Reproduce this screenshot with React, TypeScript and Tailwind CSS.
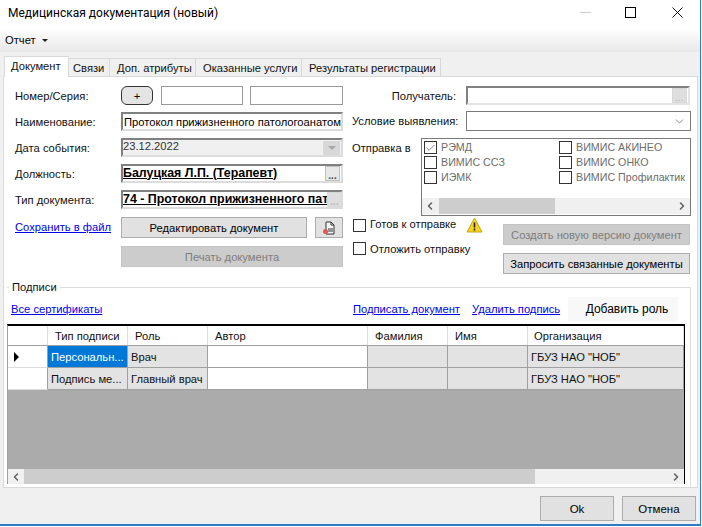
import { ChevronDown, ChevronLeft, ChevronRight, Check } from "lucide-react";
import type { ReactNode } from "react";

const inputClass =
  "h-[19px] border-2 border-t-[#808080] border-l-[#808080] border-r-[#dcdcdc] border-b-[#dcdcdc] flex items-center overflow-hidden whitespace-nowrap";

const DotsButton = ({ faded }: { faded?: boolean }) => (
  <div
    className={`w-[15px] h-[15px] shrink-0 border flex items-end justify-center leading-[9px] text-[10px] ml-auto mr-px ${
      faded ? "border-[#d8d8d8] bg-[#dedede] text-[#bbbbbb]" : "border-[#c0c0c0] bg-[#e8e8e8] text-[#444444]"
    }`}
  >
    ...
  </div>
);

const FormRow = ({ label, top, children }: { label: string; top: number; children: ReactNode }) => (
  <div className="flex items-center" style={{ marginTop: top }}>
    <div className="w-[106px] shrink-0 text-[#111111]">{label}</div>
    <div className="w-[222px]">{children}</div>
  </div>
);

const Box = ({ checked }: { checked?: boolean }) => (
  <div className="w-[13px] h-[13px] shrink-0 border border-[#333333] bg-white flex items-center justify-center">
    {checked && <Check size={12} strokeWidth={1.5} className="text-[#555555]" />}
  </div>
);

const ListItem = ({ label, checked }: { label: string; checked?: boolean }) => (
  <div className="h-[15px] flex items-center gap-[4px] text-[#6d6d6d] text-[10.7px] whitespace-nowrap">
    <Box checked={checked} />
    <span className="-mt-[2px]">{label}</span>
  </div>
);

const columns = [
  { title: "Тип подписи", width: "w-[80px]", pad: "pl-[7px]" },
  { title: "Роль", width: "w-[80px]", pad: "pl-[7px]" },
  { title: "Автор", width: "w-[160px]", pad: "pl-[7px]" },
  { title: "Фамилия", width: "w-[80px]", pad: "pl-[7px]" },
  { title: "Имя", width: "w-[80px]", pad: "pl-[7px]" },
  { title: "Организация", width: "w-[156px]", pad: "pl-[6px]" },
];

const rows = [
  { type: "Персональн...", role: "Врач", selected: true },
  { type: "Подпись ме...", role: "Главный врач", selected: false },
];

const cell = "h-[22px] flex items-center pl-[3px] border-r border-b border-[#a0a0a0] whitespace-nowrap overflow-hidden";

const App = () => {
  return (
    <div
      className="w-[702px] h-[527px] overflow-hidden bg-white text-[11.2px] leading-[14px] text-black"
      style={{ fontFamily: '"Liberation Sans", Arial, sans-serif' }}
    >
      <div className="w-[701px] h-[526px] flex flex-col bg-[#f0f0f0] border-r border-b-2 border-[#2b7cc4]">
        {/* title bar */}
        <div className="h-[28px] shrink-0 bg-white flex items-center pl-[8px] text-[12px]" style={{ fontFamily: 'Roboto, sans-serif' }}>
          <span className="flex-1 -mt-[3px]">Медицинская документация (новый)</span>
          <div className="w-[11px] h-px bg-[#cccccc] mr-[34px] -mt-[4px]" />
          <div className="w-[11px] h-[11px] border border-black mr-[36px] -mt-[4px]" />
          <svg width="11" height="11" viewBox="0 0 11 11" className="mr-[17px] -mt-[4px]">
            <path d="M0.5 0.5l10 10M10.5 0.5l-10 10" stroke="#111111" strokeWidth="1" />
          </svg>
        </div>

        {/* menu */}
        <div className="h-[24px] shrink-0 bg-gradient-to-b from-white to-[#e8e8e8] flex items-center pl-[5px] gap-[6px]">
          <span>Отчет</span>
          <span className="border-x-[3px] border-x-transparent border-t-[3px] border-t-[#222222]" />
        </div>

        {/* tabs */}
        <div className="h-[24px] shrink-0 flex items-end pl-[4px] text-[#111111]">
          <div className="w-[65px] h-[21px] -mb-px z-10 bg-white border border-b-0 border-[#d9d9d9] pl-[6px] pt-[2px]">Документ</div>
          <div className="w-[41px] h-[18px] bg-[#f0f0f0] border-t border-r border-[#d9d9d9] pl-[4px] pt-[2px]">Связи</div>
          <div className="w-[86px] h-[18px] bg-[#f0f0f0] border-t border-r border-[#d9d9d9] pl-[7px] pt-[2px]">Доп. атрибуты</div>
          <div className="w-[106px] h-[18px] bg-[#f0f0f0] border-t border-r border-[#d9d9d9] pl-[7px] pt-[2px]">Оказанные услуги</div>
          <div className="w-[139px] h-[18px] bg-[#f0f0f0] border-t border-r border-[#d9d9d9] pl-[7px] pt-[2px] whitespace-nowrap">Результаты регистрации</div>
        </div>

        {/* tab page */}
        <div className="ml-[3px] w-[695px] h-[412px] shrink-0 bg-white border border-[#d9d9d9] flex flex-col">
          <div className="h-[210px] shrink-0 flex">
            {/* left column */}
            <div className="w-[348px] shrink-0 pl-[11px] pt-[9px]">
              <FormRow label="Номер/Серия:" top={0}>
                <div className="flex items-center h-[19px]">
                  <div className="w-[32px] h-[19px] rounded-[6px] border border-[#333333] bg-[#e4e4e4] flex items-center justify-center">+</div>
                  <div className="w-[82px] h-[19px] ml-[8px] border border-[#999999]" />
                  <div className="w-[93px] h-[19px] ml-[7px] border border-[#999999]" />
                </div>
              </FormRow>
              <FormRow label="Наименование:" top={7}>
                <div className={`${inputClass} pl-px`}>Протокол прижизненного патологоанатоми</div>
              </FormRow>
              <FormRow label="Дата события:" top={7}>
                <div className={`${inputClass} bg-[#f0f0f0] text-[#333333]`}>
                  <span className="-mt-[3px]">23.12.2022</span>
                  <div className="ml-auto mr-px w-[17px] h-[14px] bg-[#d8d8d8] flex items-center justify-center">
                    <span className="border-x-[4px] border-x-transparent border-t-[4px] border-t-[#a8a8a8]" />
                  </div>
                </div>
              </FormRow>
              <FormRow label="Должность:" top={7}>
                <div className={`${inputClass} font-bold text-[12.4px]`}>
                  <span className="underline underline-offset-1 -mt-[2px]">Балуцкая Л.П. (Терапевт)</span>
                  <DotsButton />
                </div>
              </FormRow>
              <FormRow label="Тип документа:" top={7}>
                <div className={`${inputClass} font-bold text-[12.4px]`}>
                  <span className="underline underline-offset-1 w-[204px] shrink-0 overflow-hidden -mt-[2px]">74 - Протокол прижизненного пат</span>
                  <DotsButton faded />
                </div>
              </FormRow>
              <div className="flex items-start mt-[8px]">
                <a className="w-[106px] shrink-0 text-[#0000ee] underline mt-[3px]">Сохранить в файл</a>
                <div className="w-[186px] h-[21px] bg-[#e1e1e1] border border-[#adadad] flex items-center justify-center">Редактировать документ</div>
                <div className="w-[28px] h-[21px] ml-[8px] bg-[#e1e1e1] border border-[#adadad] flex items-center justify-center">
                  <svg width="16" height="16" viewBox="0 0 16 16" fill="none">
                    <path d="M5 2h5l3 3v9H5z" fill="#f4f4f4" stroke="#333333" />
                    <path d="M10 2v3h3M7 9h5M7 11h5" stroke="#333333" />
                    <circle cx="4.5" cy="11.5" r="2.5" fill="#e45454" />
                  </svg>
                </div>
              </div>
              <div className="ml-[106px] mt-[8px] w-[222px] h-[21px] bg-[#cccccc] border border-[#c4c4c4] text-[#7d7d7d] flex items-center justify-center">Печать документа</div>
            </div>

            {/* right column */}
            <div className="flex-1 pt-[9px]">
              <div className="flex items-center h-[19px]">
                <div className="w-[104px] text-right text-[#111111]">Получатель:</div>
                <div className="ml-[10px] w-[224px] h-[19px] border-2 border-t-[#808080] border-l-[#808080] border-r-[#e4e4e4] border-b-[#e4e4e4] flex items-center">
                  <DotsButton faded />
                </div>
              </div>
              <div className="flex items-center mt-[6px]">
                <div className="w-[102px] text-[#111111] whitespace-nowrap">Условие выявления:</div>
                <div className="ml-[12px] w-[225px] h-[20px] border border-[#7a7a7a] flex items-center justify-end pr-[4px]">
                  <ChevronDown size={13} strokeWidth={1.2} className="text-[#555555]" />
                </div>
              </div>
              <div className="flex mt-[7px]">
                <div className="w-[69px] pt-[3px] text-[#111111]">Отправка в</div>
                <div className="w-[270px] h-[78px] border border-[#7a7a7a] flex flex-col">
                  <div className="flex-1 grid grid-cols-[135px_1fr] pl-[2px] pt-px overflow-hidden">
                    <div>
                      <ListItem label="РЭМД" checked />
                      <ListItem label="ВИМИС ССЗ" />
                      <ListItem label="ИЭМК" />
                    </div>
                    <div className="overflow-hidden">
                      <ListItem label="ВИМИС АКИНЕО" />
                      <ListItem label="ВИМИС ОНКО" />
                      <ListItem label="ВИМИС Профилактик" />
                    </div>
                  </div>
                  <div className="h-[16px] mb-px bg-[#f0f0f0] flex items-center justify-between">
                    <ChevronLeft size={12} strokeWidth={3} className="text-[#606060] ml-[2px]" />
                    <div className="h-[16px] w-[116px] bg-[#cdcdcd] ml-[3px] mr-auto" />
                    <ChevronRight size={12} strokeWidth={3} className="text-[#606060] mr-[2px]" />
                  </div>
                </div>
              </div>
              <div className="flex mt-[2px] pl-[1px]">
                <div className="w-[150px] shrink-0">
                  <div className="flex items-center h-[15px] gap-[4px] text-[#111111]">
                    <Box />
                    <span className="whitespace-nowrap -mt-[3px]">Готов к отправке</span>
                    <svg width="17" height="16" viewBox="0 0 17 16" className="ml-[6px] -mt-[2px] shrink-0">
                      <path d="M8.5 1L16 15H1z" fill="#f5d327" stroke="#c9a30f" />
                      <path d="M8.5 5.5v5M8.5 11.5v2" stroke="#222222" strokeWidth="1.6" />
                    </svg>
                  </div>
                  <div className="flex items-center h-[15px] gap-[4px] mt-[8px] text-[#111111]">
                    <Box />
                    <span className="whitespace-nowrap">Отложить отправку</span>
                  </div>
                </div>
                <div className="w-[187px] pt-[6px]">
                  <div className="h-[21px] bg-[#cccccc] border border-[#c4c4c4] text-[#7d7d7d] flex items-center justify-center whitespace-nowrap overflow-hidden">Создать новую версию документ</div>
                  <div className="h-[21px] mt-[8px] bg-[#e1e1e1] border border-[#adadad] flex items-center justify-center whitespace-nowrap overflow-hidden">Запросить связанные документы</div>
                </div>
              </div>
            </div>
          </div>

          {/* group box */}
          <div className="flex-1 flex flex-col ml-[3px] w-[684px] border-t border-r border-[#dcdcdc] relative">
            <span className="absolute -top-[8px] left-[2px] bg-white px-[3px] text-[#111111]">Подписи</span>
            <div className="h-[36px] shrink-0 flex items-start pt-[9px] text-[#0000ee]">
              <div className="w-[342px] pl-[4px] shrink-0 mt-[5px]"><a className="underline">Все сертификаты</a></div>
              <div className="w-[119px] pl-[4px] shrink-0 mt-[5px]"><a className="underline">Подписать документ</a></div>
              <div className="w-[96px] pl-[4px] shrink-0 mt-[5px]"><a className="underline">Удалить подпись</a></div>
              <div className="ml-[4px] w-[110px] h-[24px] pl-[8px] bg-[#f8f8f8] text-black flex items-center justify-center text-[12px]">Добавить роль</div>
            </div>
            <div className="w-[678px] h-[160px] shrink-0 border-t-2 border-t-black border-r border-r-black border-l border-l-[#a0a0a0] bg-[#ababab] flex flex-col text-[#111111]">
              <div className="flex h-[20px] shrink-0 bg-white border-b border-[#a0a0a0]">
                <div className="w-[40px] border-r border-[#dcdcdc]" />
                {columns.map((c) => (
                  <div key={c.title} className={`${c.width} ${c.pad} flex items-center border-r border-[#dcdcdc] whitespace-nowrap`}>{c.title}</div>
                ))}
              </div>
              {rows.map((r) => (
                <div key={r.type} className="flex shrink-0">
                  <div className="w-[40px] h-[22px] bg-white border-r border-b border-[#dcdcdc] border-r-[#a0a0a0] flex items-center pl-[6px]">
                    {r.selected && <span className="border-y-[5px] border-y-transparent border-l-[5px] border-l-black" />}
                  </div>
                  <div className={`${cell} w-[80px] ${r.selected ? "bg-[#0078d7] text-white" : "bg-[#e3e3e3]"}`}>{r.type}</div>
                  <div className={`${cell} w-[80px] bg-[#e3e3e3]`}>{r.role}</div>
                  <div className={`${cell} w-[160px] bg-white`} />
                  <div className={`${cell} w-[80px] bg-[#e3e3e3]`} />
                  <div className={`${cell} w-[80px] bg-[#e3e3e3]`} />
                  <div className={`${cell} w-[156px] bg-[#e3e3e3]`}>ГБУЗ НАО "НОБ"</div>
                </div>
              ))}
              <div className="flex-1" />
              <div className="h-[15px] shrink-0 mt-px bg-[#f0f0f0] flex items-center">
                <div className="w-[16px] flex justify-center">
                  <ChevronLeft size={12} strokeWidth={3} className="text-[#606060]" />
                </div>
                <div className="h-[15px] w-[511px] bg-[#cdcdcd]" />
                <ChevronRight size={12} strokeWidth={3} className="text-[#606060] ml-auto mr-[2px]" />
              </div>
            </div>
          </div>
        </div>

        {/* dialog buttons */}
        <div className="flex-1 flex justify-end items-start pt-[8px] pr-[4px] gap-[8px] text-[11.5px]">
          <div className="w-[74px] h-[25px] bg-[#e1e1e1] border border-[#adadad] flex items-center justify-center">Ok</div>
          <div className="w-[74px] h-[25px] bg-[#e1e1e1] border border-[#adadad] flex items-center justify-center">Отмена</div>
        </div>
      </div>
    </div>
  );
};

export default App;
